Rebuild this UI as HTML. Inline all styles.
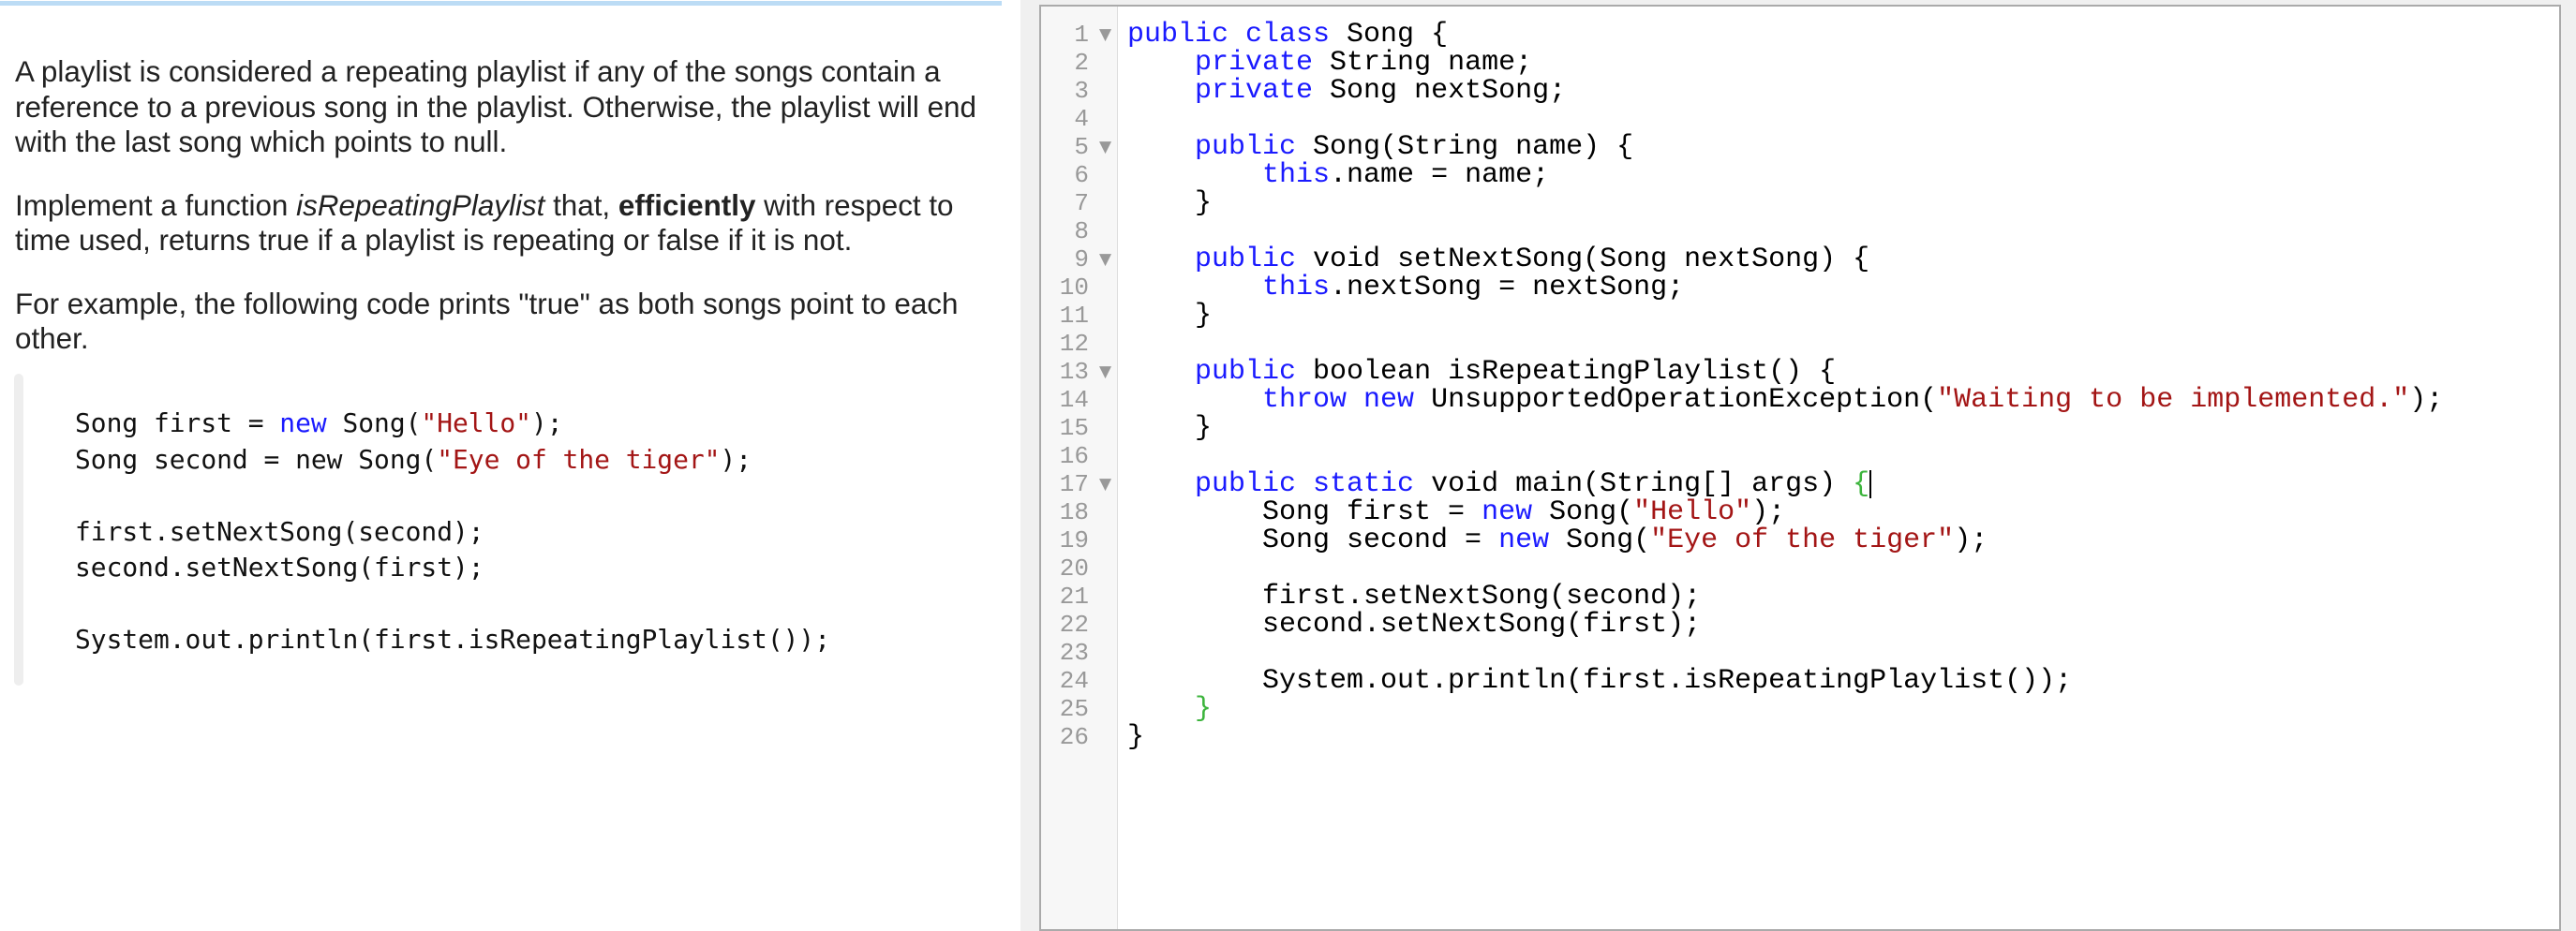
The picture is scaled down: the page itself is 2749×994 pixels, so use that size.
<!DOCTYPE html>
<html><head><meta charset="utf-8"><style>
html,body{margin:0;padding:0;width:2749px;height:994px;overflow:hidden;background:#fff;position:relative}
.bar{position:absolute;left:0;top:1px;width:1069px;height:5px;background:#bcdcf5}
.desc{position:absolute;left:16px;top:58px;width:1060px;font-family:"Liberation Sans",sans-serif;font-size:31.4px;line-height:37.5px;color:#222}
.desc p{margin:0 0 30px 0;white-space:nowrap}
.cb{position:absolute;left:15px;top:399px;width:10px;height:333px;background:#eee;border-radius:5px}
.lc{position:absolute;left:80px;top:433px;font-family:"DejaVu Sans Mono",monospace;font-size:27.9px;line-height:38.5px;color:#111;white-space:pre;margin:0}
.k{color:#1a1aff}.s{color:#a31515}.g{color:#3cb43c}
.side{position:absolute;left:1089px;top:0;width:1660px;height:994px;background:#f0f0f0}
.ed{position:absolute;left:1109px;top:5px;width:1620px;height:985px;border:2px solid #aaa;background:#fff}
.gut{position:absolute;left:0;top:0;width:81px;height:100%;background:#f7f7f7;border-right:1px solid #ddd}
.nums{position:absolute;left:0;top:15px;width:51px;text-align:right;font-family:"Liberation Mono",monospace;font-size:26px;line-height:30px;color:#999;white-space:pre;margin:0}
.arr{position:absolute;left:62px;font-size:17px;color:#999;font-family:"DejaVu Sans",sans-serif;line-height:30px}
.code{position:absolute;left:92px;top:15px;font-family:"Liberation Mono",monospace;font-size:30px;line-height:30px;color:#000;white-space:pre;margin:0}
.cur{display:inline-block;width:2px;height:30px;background:#000;vertical-align:top}
</style></head><body>
<div class="bar"></div>
<div class="desc">
<p>A playlist is considered a repeating playlist if any of the songs contain a<br>reference to a previous song in the playlist. Otherwise, the playlist will end<br>with the last song which points to null.</p>
<p>Implement a function <i>isRepeatingPlaylist</i> that, <b>efficiently</b> with respect to<br>time used, returns true if a playlist is repeating or false if it is not.</p>
<p>For example, the following code prints "true" as both songs point to each<br>other.</p>
</div>
<div class="cb"></div>
<pre class="lc">Song first = <span class="k">new</span> Song(<span class="s">"Hello"</span>);
Song second = new Song(<span class="s">"Eye of the tiger"</span>);

first.setNextSong(second);
second.setNextSong(first);

System.out.println(first.isRepeatingPlaylist());</pre>
<div class="side"></div>
<div class="ed">
<div class="gut">
<pre class="nums">1
2
3
4
5
6
7
8
9
10
11
12
13
14
15
16
17
18
19
20
21
22
23
24
25
26</pre>
<div class="arr" style="top:15px">▼</div>
<div class="arr" style="top:135px">▼</div>
<div class="arr" style="top:255px">▼</div>
<div class="arr" style="top:375px">▼</div>
<div class="arr" style="top:495px">▼</div>
</div>
<pre class="code"><span class="k">public class</span> Song {
    <span class="k">private</span> String name;
    <span class="k">private</span> Song nextSong;

    <span class="k">public</span> Song(String name) {
        <span class="k">this</span>.name = name;
    }

    <span class="k">public</span> void setNextSong(Song nextSong) {
        <span class="k">this</span>.nextSong = nextSong;
    }

    <span class="k">public</span> boolean isRepeatingPlaylist() {
        <span class="k">throw new</span> UnsupportedOperationException(<span class="s">"Waiting to be implemented."</span>);
    }

    <span class="k">public static</span> void main(String[] args) <span class="g">{</span><span class="cur"></span>
        Song first = <span class="k">new</span> Song(<span class="s">"Hello"</span>);
        Song second = <span class="k">new</span> Song(<span class="s">"Eye of the tiger"</span>);

        first.setNextSong(second);
        second.setNextSong(first);

        System.out.println(first.isRepeatingPlaylist());
    <span class="g">}</span>
}</pre>
</div>
</body></html>
